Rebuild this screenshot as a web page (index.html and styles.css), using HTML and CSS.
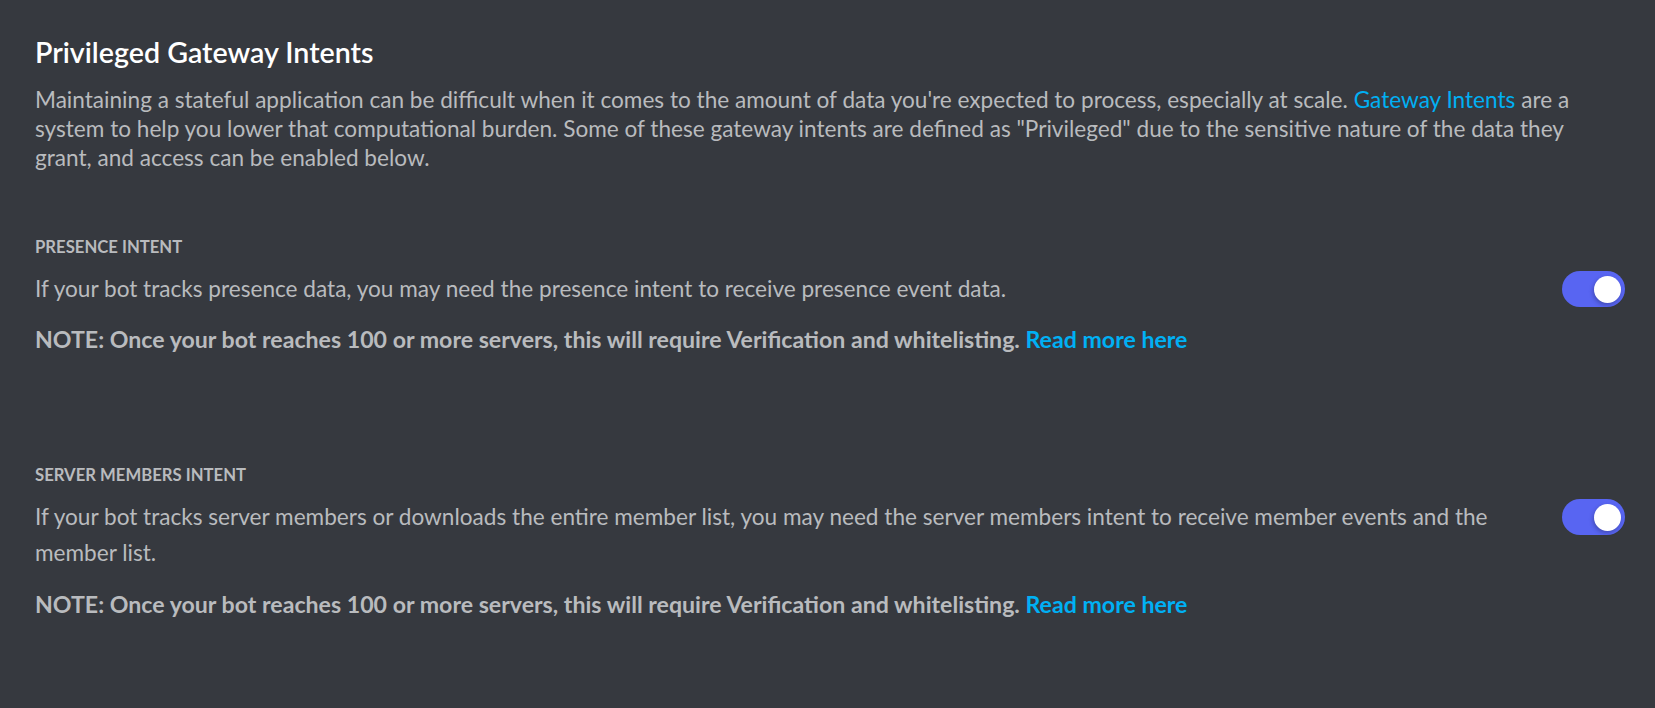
FILE: index.html
```html
<!DOCTYPE html>
<html lang="en">
<head>
<meta charset="utf-8">
<title>Privileged Gateway Intents</title>
<link rel="stylesheet" href="styles.css">
</head>
<body>
<main class="page">
  <h2 class="title">Privileged Gateway Intents</h2>
  <p class="intro">Maintaining a stateful application can be difficult when it comes to the amount of data you're expected to process, especially at scale. <a class="link" href="#">Gateway Intents</a> are a system to help you lower that computational burden. Some of these gateway intents are defined as "Privileged" due to the sensitive nature of the data they grant, and access can be enabled below.</p>

  <div class="intents">
    <section class="intent">
      <h5 class="label">Presence Intent</h5>
      <div class="row">
        <p class="desc">If your bot tracks presence data, you may need the presence intent to receive presence event data.</p>
        <div class="switch" role="switch" aria-checked="true"><span class="knob"></span></div>
      </div>
      <p class="note">NOTE: Once your bot reaches 100 or more servers, this will require Verification and whitelisting. <a class="link" href="#">Read more here</a></p>
    </section>

    <section class="intent">
      <h5 class="label">Server Members Intent</h5>
      <div class="row">
        <p class="desc">If your bot tracks server members or downloads the entire member list, you may need the server members intent to receive member events and the member list.</p>
        <div class="switch" role="switch" aria-checked="true"><span class="knob"></span></div>
      </div>
      <p class="note">NOTE: Once your bot reaches 100 or more servers, this will require Verification and whitelisting. <a class="link" href="#">Read more here</a></p>
    </section>
  </div>
</main>
</body>
</html>
```
FILE: styles.css
```css
html, body {
  margin: 0;
  padding: 0;
  background: #36393f;
  height: 100%;
}

body {
  font-family: "Lato", "Noto Sans", sans-serif;
  color: #b9bbbe;
}

.page {
  padding: 35px 30px 0 35px;
}

.title {
  margin: 0;
  font-size: 28.6px;
  line-height: 34px;
  font-weight: 600;
  color: #ffffff;
}

.intro {
  margin: 16px 0 0;
  font-size: 22.6px;
  line-height: 29px;
  font-weight: 400;
  color: #b9bbbe;
}

.link {
  color: #00b0f4;
  text-decoration: none;
}

.intents {
  display: flex;
  flex-direction: column;
  gap: 65px;
  margin-top: 65px;
}

.intent {
  padding-bottom: 46px;
}

.intent:last-child {
  padding-bottom: 0;
}

.label {
  margin: 0;
  font-size: 16.7px;
  line-height: 20px;
  font-weight: 700;
  text-transform: uppercase;
  color: #b9bbbe;
}

.row {
  display: flex;
  align-items: flex-start;
  margin-top: 14px;
}

.desc {
  flex: 1;
  margin: 0;
  font-size: 22.6px;
  line-height: 36px;
  color: #b9bbbe;
}

.switch {
  flex: 0 0 auto;
  width: 63px;
  height: 36px;
  margin-left: 40px;
  border-radius: 18px;
  background: #5865f2;
  display: flex;
  align-items: center;
  justify-content: flex-end;
  padding: 0 4px;
  box-sizing: border-box;
}

.knob {
  width: 27px;
  height: 27px;
  border-radius: 50%;
  background: #ffffff;
  box-shadow: -1px 2px 4px rgba(0, 0, 0, 0.25);
}

.note {
  margin: 17px 0 0;
  font-size: 23.15px;
  line-height: 30px;
  font-weight: 700;
  color: #b9bbbe;
}

.intent:last-child .note {
  margin-top: 18px;
}
```
